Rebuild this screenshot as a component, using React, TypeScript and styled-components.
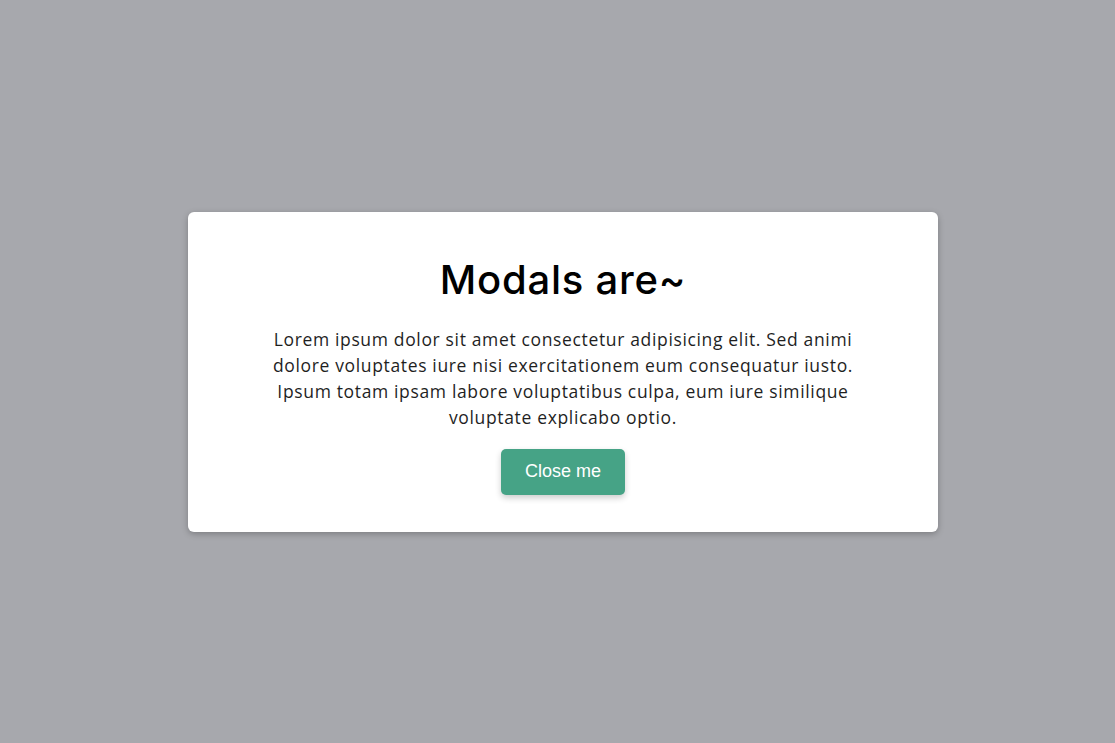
import React from "react";
import styled, { createGlobalStyle } from "styled-components";

const Global = createGlobalStyle`
  html, body { margin: 0; padding: 0; }
  body { background: #a7a8ad; font-family: "Open Sans", "Noto Sans", sans-serif; }
`;

const Overlay = styled.div`
  width: 1115px;
  height: 743px;
  display: flex;
  align-items: center;
  justify-content: center;
  padding-left: 11px;
  box-sizing: border-box;
`;

const Modal = styled.div`
  width: 750px;
  height: 320px;
  box-sizing: border-box;
  background: #ffffff;
  border-radius: 6px;
  box-shadow: 0 2px 6px rgba(0, 0, 0, 0.25);
  display: flex;
  flex-direction: column;
  align-items: center;
  padding-top: 38px;
`;

const Title = styled.h2`
  margin: 0;
  font-family: Inter, "Open Sans", sans-serif;
  font-weight: 500;
  font-size: 40px;
  line-height: 60px;
  color: #000;
  letter-spacing: 0.75px;
`;

const Body = styled.p`
  margin: 16px 0 0;
  font-family: "Open Sans", sans-serif;
  font-weight: 400;
  font-size: 17.5px;
  line-height: 26px;
  color: #1f1f1f;
  text-align: center;
  letter-spacing: 0.65px;
`;

const Button = styled.button`
  margin-top: 19px;
  width: 124px;
  height: 46px;
  border: none;
  border-radius: 5px;
  background: #46a386;
  color: #fff;
  font-family: "Liberation Sans", Arial, sans-serif;
  font-size: 18px;
  box-shadow: 0 3px 6px rgba(0, 0, 0, 0.2);
  cursor: pointer;
`;

export default function App() {
  return (
    <>
      <Global />
      <Overlay>
        <Modal>
          <Title>Modals are~</Title>
          <Body>
            Lorem ipsum dolor sit amet consectetur adipisicing elit. Sed animi
            <br />
            dolore voluptates iure nisi exercitationem eum consequatur iusto.
            <br />
            Ipsum totam ipsam labore voluptatibus culpa, eum iure similique
            <br />
            voluptate explicabo optio.
          </Body>
          <Button>Close me</Button>
        </Modal>
      </Overlay>
    </>
  );
}
